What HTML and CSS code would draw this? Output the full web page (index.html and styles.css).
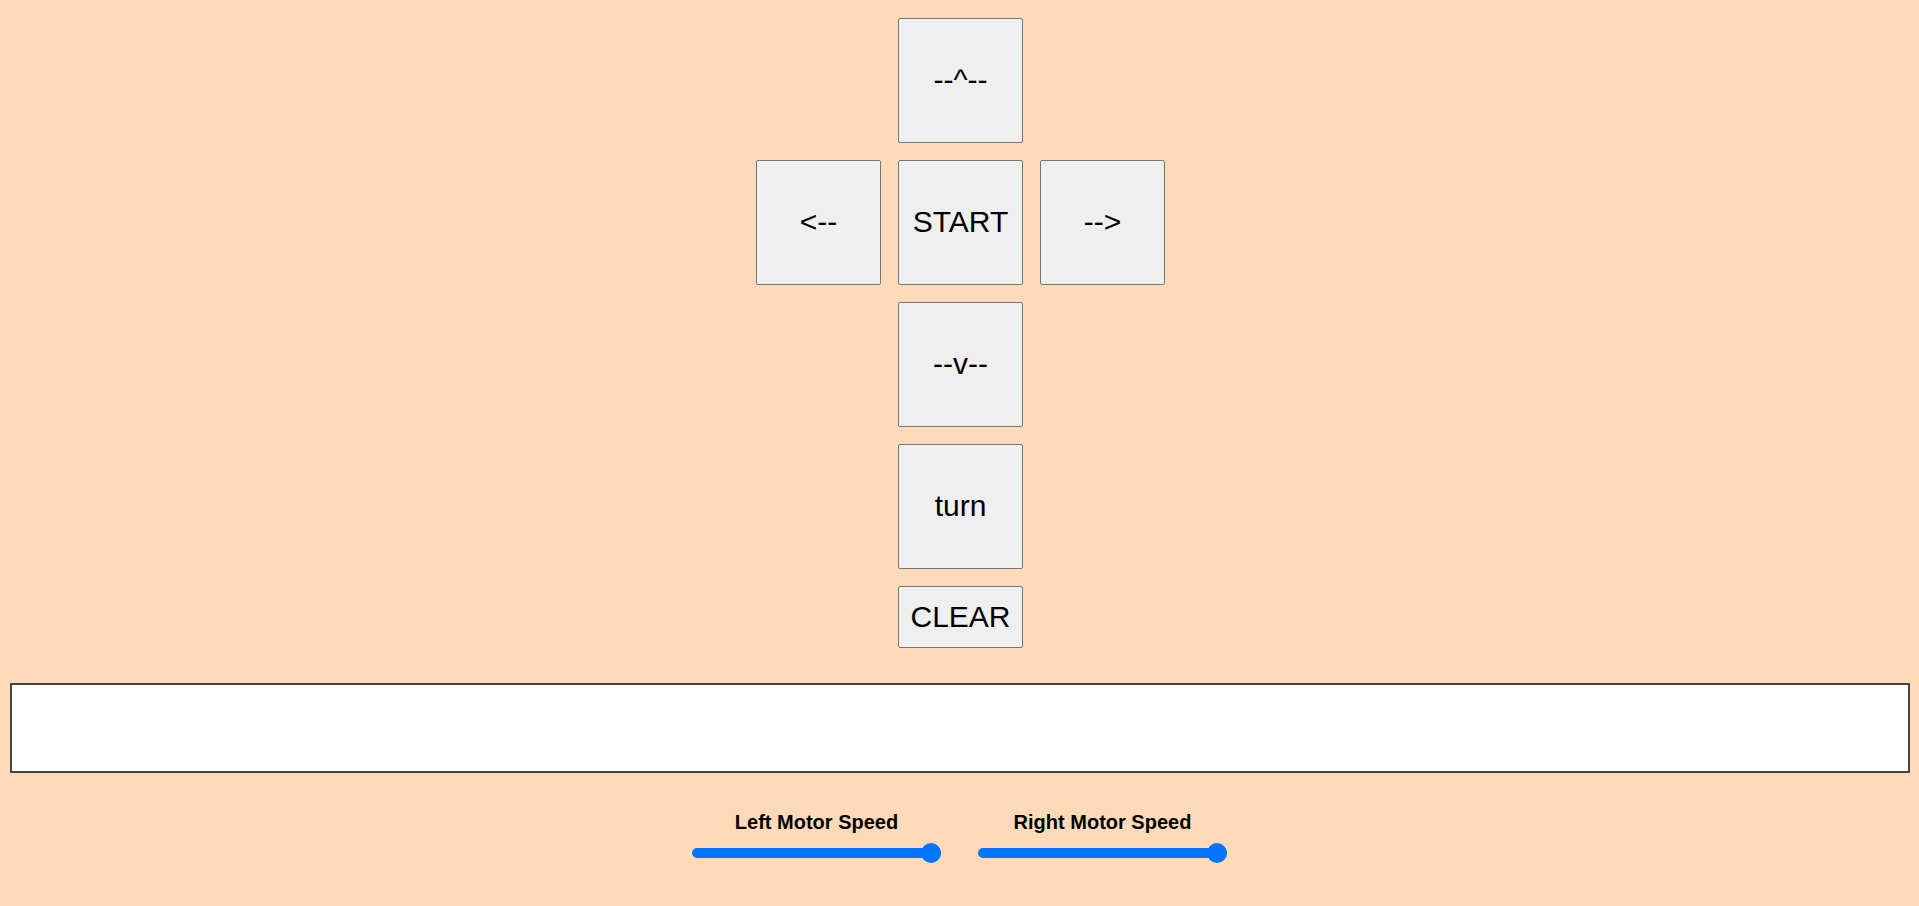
FILE: index.html
```html
<!DOCTYPE html>
<html>
<head>
<meta charset="utf-8">
<link rel="stylesheet" href="styles.css">
</head>
<body>
<div class="pad">
  <button class="btn up">--^--</button>
  <button class="btn left">&lt;--</button>
  <button class="btn start">START</button>
  <button class="btn right">--&gt;</button>
  <button class="btn down">--v--</button>
  <button class="btn turn">turn</button>
  <button class="btn clear">CLEAR</button>
</div>
<div class="log"></div>
<div class="speeds">
  <div class="speed">
    <label class="speed-label">Left Motor Speed</label>
    <input class="slider" type="range" min="0" max="255" value="255">
  </div>
  <div class="speed">
    <label class="speed-label">Right Motor Speed</label>
    <input class="slider" type="range" min="0" max="255" value="255">
  </div>
</div>
</body>
</html>
```

FILE: styles.css
```css
html, body {
  margin: 0;
  padding: 0;
}
body {
  background: #ffdab9;
  font-family: "Liberation Sans", Arial, sans-serif;
  color: #000;
}
.pad {
  display: grid;
  grid-template-columns: repeat(3, 124.5px);
  grid-template-rows: 124.5px 124.5px 124.5px 124.5px 61.5px;
  gap: 17.5px;
  justify-content: center;
  padding-top: 18px;
  padding-left: 2px;
}
.btn {
  box-sizing: border-box;
  width: 100%;
  height: 100%;
  margin: 0;
  padding: 0;
  background: #efefef;
  border: 1px solid #767676;
  border-radius: 2px;
  font-family: "Liberation Sans", Arial, sans-serif;
  font-size: 30px;
  color: #000;
}
.up { grid-column: 2; grid-row: 1; }
.left { grid-column: 1; grid-row: 2; }
.start { grid-column: 2; grid-row: 2; }
.right { grid-column: 3; grid-row: 2; }
.down { grid-column: 2; grid-row: 3; }
.turn { grid-column: 2; grid-row: 4; }
.clear { grid-column: 2; grid-row: 5; }
.log {
  box-sizing: border-box;
  margin: 35px 9px 0 10px;
  height: 90px;
  background: #fff;
  border: 2px solid #444;
}
.speeds {
  display: flex;
  justify-content: center;
  gap: 37px;
  margin-top: 38px;
}
.speed {
  display: flex;
  flex-direction: column;
  align-items: center;
}
.speed-label {
  display: block;
  font-weight: bold;
  font-size: 20px;
  line-height: 23px;
  margin-bottom: 9px;
}
.slider {
  -webkit-appearance: none;
  appearance: none;
  width: 249px;
  height: 20px;
  margin: 0;
  background: transparent;
  outline: none;
}
.slider::-webkit-slider-runnable-track {
  height: 10px;
  border-radius: 5px;
  background: #0075ff;
}
.slider::-webkit-slider-thumb {
  -webkit-appearance: none;
  appearance: none;
  width: 20px;
  height: 20px;
  margin-top: -5px;
  border-radius: 50%;
  background: #0075ff;
  border: none;
}
```
